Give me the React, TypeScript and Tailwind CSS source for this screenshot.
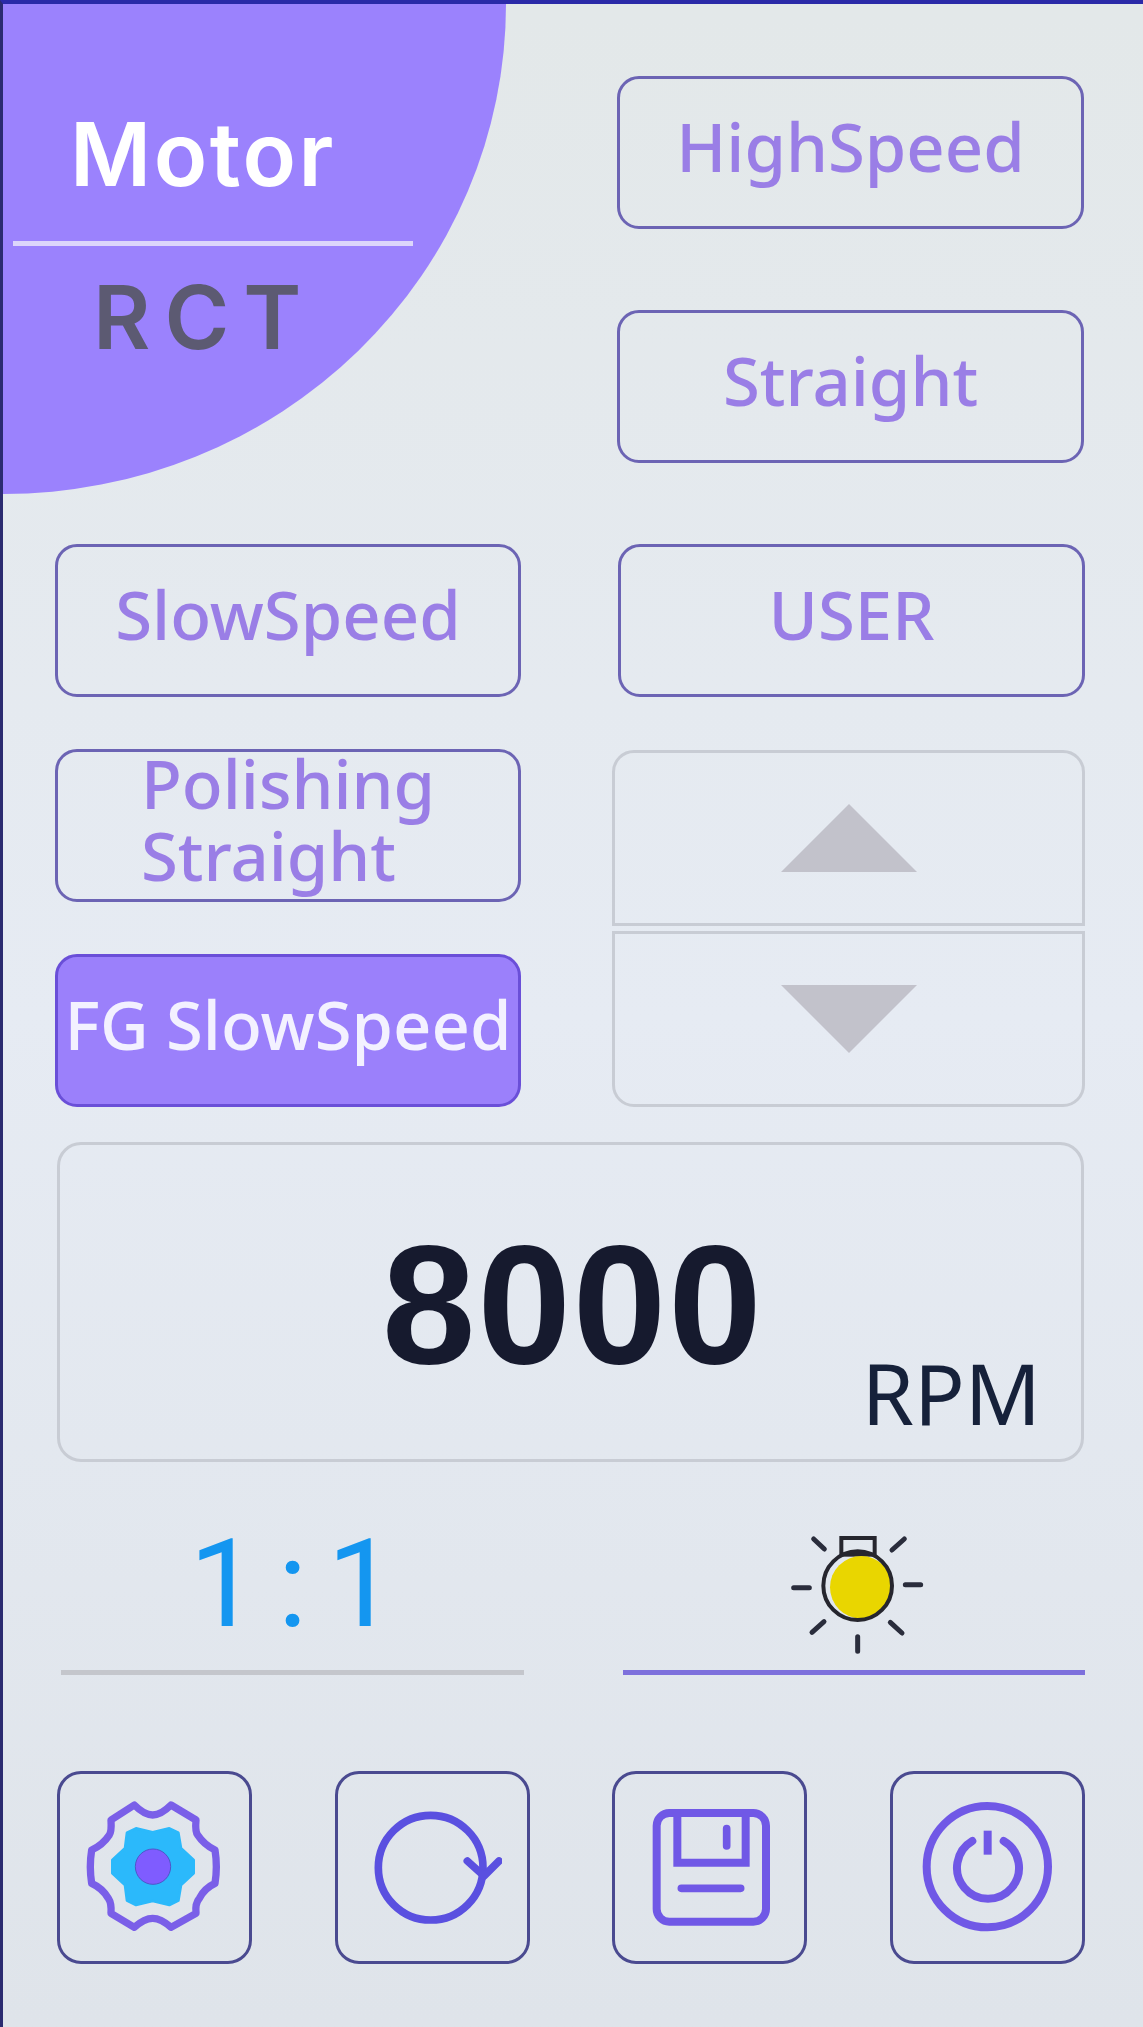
import React from "react";

const font = { fontFamily: '"Noto Sans", sans-serif' };

function ModeButton({ label, active }: { label: React.ReactNode; active?: boolean }) {
  return (
    <button
      type="button"
      style={font}
      className={`flex h-[153px] w-full items-center justify-center rounded-[22px] border-[3px] pb-[14px] text-[67px] leading-[72px] font-medium ${
        active
          ? "border-[#6a4fd8] bg-[#9b80fb] text-[#f3f1ff]"
          : "border-[#6c64b4] text-[#9a7ee6]"
      }`}
    >
      {label}
    </button>
  );
}

function IconButton({ viewBox, children }: { viewBox: string; children: React.ReactNode }) {
  return (
    <button
      type="button"
      className="flex h-[193px] w-[195px] items-center justify-center rounded-[24px] border-[3px] border-[#4a4a90]"
    >
      <svg viewBox={viewBox} className="h-[140px] w-[140px]" fill="none">
        {children}
      </svg>
    </button>
  );
}

function GearIcon() {
  return (
    <IconButton viewBox="132 114 420 420">
      <path
        d="M280 135 Q310 165 335 165 Q360 165 390 135 L465 180 Q462 215 470 225 Q490 255 522 270 Q530 320 522 370 Q490 385 475 415 Q462 430 465 460 L390 502 Q360 475 335 475 Q310 475 280 502 L210 460 Q212 430 202 415 Q185 385 152 370 Q144 320 152 270 Q185 255 205 225 Q212 215 210 180 Z"
        stroke="#7a5fe8"
        strokeWidth="22"
        strokeLinejoin="round"
      />
      <polygon
        points="285,205 335,217 385,205 412,218 420,265 458,300 458,340 420,375 412,422 385,435 335,423 285,435 258,422 252,375 214,340 214,300 252,265 258,218"
        fill="#2bb9fb"
        stroke="#2bb9fb"
        strokeWidth="8"
        strokeLinejoin="round"
      />
      <circle cx="336" cy="320" r="53" fill="#7f5cff" stroke="#4f56c8" strokeWidth="3" />
    </IconButton>
  );
}

function ReloadIcon() {
  return (
    <IconButton viewBox="969 116 420 420">
      <circle cx="1175" cy="325" r="157" stroke="#5a50e0" strokeWidth="23" />
      <path
        d="M1285 305 L1335 350 L1380 305"
        stroke="#5a50e0"
        strokeWidth="23"
        strokeLinecap="round"
        strokeLinejoin="round"
      />
    </IconButton>
  );
}

function SaveIcon() {
  return (
    <IconButton viewBox="118 116 420 420">
      <rect x="168" y="161" width="328" height="326" rx="38" stroke="#7058e6" strokeWidth="24" />
      <path d="M230 165 V310 H435 V165" stroke="#7058e6" strokeWidth="24" />
      <path
        d="M378 208 V260 M242 387 H420"
        stroke="#7058e6"
        strokeWidth="23"
        strokeLinecap="round"
      />
    </IconButton>
  );
}

function PowerIcon() {
  return (
    <IconButton viewBox="952 114 420 420">
      <circle cx="1163" cy="320" r="182" stroke="#7058e6" strokeWidth="24" />
      <path
        d="M1118 243 A93 93 0 1 0 1212 243"
        stroke="#7058e6"
        strokeWidth="24"
        strokeLinecap="round"
      />
      <path d="M1164 212 V284" stroke="#7058e6" strokeWidth="24" />
    </IconButton>
  );
}

function BulbIcon() {
  return (
    <svg viewBox="6 8 540 510" className="h-[170px] w-[180px]" fill="none">
      <rect x="238" y="122" width="100" height="50" stroke="#26262e" strokeWidth="12" />
      <circle cx="298" cy="270" r="94" fill="#e9d600" />
      <circle cx="287" cy="265" r="103" stroke="#26262e" strokeWidth="12" />
      <path
        d="M155 125 L187 155 M427 125 L390 158 M95 271 H142 M430 262 H476 M150 405 L186 373 M385 375 L420 407 M287 418 V462"
        stroke="#2a2d3c"
        strokeWidth="15"
        strokeLinecap="round"
      />
    </svg>
  );
}

export default function App() {
  return (
    <div className="h-[2027px] w-[1143px] overflow-hidden border-t-[4px] border-l-[3px] border-t-[#2a2aa8] border-l-[#2b2b70] bg-gradient-to-b from-[#e3e8e9] via-[#e6ebf3] to-[#dfe4ea]">
      {/* header row */}
      <div className="flex h-[490px]">
        <div className="h-full w-[503px] shrink-0 rounded-br-[100%] bg-[#9b82fd] pt-[100px]">
          <div
            style={{ fontFamily: "Inter, sans-serif" }}
            className="pl-[67px] text-[88px] leading-[100px] font-semibold tracking-[2.5px] text-white"
          >
            Motor
          </div>
          <div className="mt-[37px] ml-[10px] h-[5px] w-[400px] bg-[#dcd6fb]" />
          <div
            style={{ fontFamily: "Inter, sans-serif" }}
            className="mt-[28px] pl-[90px] text-[88px] leading-[86px] font-semibold tracking-[14px] text-[#5c5a72]"
          >
            RCT
          </div>
        </div>
        <div className="ml-[111px] flex w-[467px] flex-col gap-[81px] pt-[72px]">
          <ModeButton label="HighSpeed" />
          <ModeButton label="Straight" />
        </div>
      </div>

      {/* mode buttons + arrows */}
      <div className="mt-[50px] flex pl-[52px]">
        <div className="flex w-[466px] flex-col gap-[52px]">
          <ModeButton label="SlowSpeed" />
          <ModeButton
            label={
              <span className="text-left">
                <span className="block">Polishing</span>
                <span className="block">Straight</span>
              </span>
            }
          />
          <ModeButton label="FG SlowSpeed" active />
        </div>
        <div className="ml-[91px] flex w-[473px] flex-col">
          <div className="ml-[6px] w-[467px]">
            <ModeButton label="USER" />
          </div>
          <div className="mt-[53px] flex h-[176px] items-center justify-center rounded-t-[22px] border-[3px] border-[#c8ccd4]">
            <div className="h-0 w-0 border-x-[68px] border-b-[68px] border-x-transparent border-b-[#c2c2cb]" />
          </div>
          <div className="mt-[5px] flex h-[176px] items-center justify-center rounded-b-[22px] border-[3px] border-[#c8ccd4]">
            <div className="h-0 w-0 border-x-[68px] border-t-[68px] border-x-transparent border-t-[#c2c2cb]" />
          </div>
        </div>
      </div>

      {/* rpm panel */}
      <div className="mt-[35px] ml-[54px] flex h-[320px] w-[1027px] rounded-[24px] border-[3px] border-[#c8ccd4] pl-[322px]">
        <div
          style={{ fontFamily: '"Liberation Sans", sans-serif' }}
          className="pt-[76px] text-[168px] leading-[168px] font-bold tracking-[2px] text-[#161a2e]"
        >
          8000
        </div>
        <div
          style={font}
          className="mb-[24px] ml-auto self-end pr-[40px] text-[84px] leading-[84px] text-[#16213a]"
        >
          RPM
        </div>
      </div>

      {/* ratio and lamp */}
      <div className="mt-[38px] flex pl-[58px]">
        <div className="w-[463px]">
          <div
            style={{ fontFamily: "Roboto, sans-serif" }}
            className="flex h-[170px] items-center justify-center gap-[20px] text-[122px] leading-none text-[#1496f0]"
          >
            <span>1</span>
            <span>:</span>
            <span>1</span>
          </div>
          <div className="h-[5px] bg-[#c4c6cc]" />
        </div>
        <div className="ml-[99px] w-[462px]">
          <div className="flex h-[170px] items-center justify-center">
            <BulbIcon />
          </div>
          <div className="h-[5px] bg-[#7d70dc]" />
        </div>
      </div>

      {/* bottom actions */}
      <div className="mt-[96px] flex justify-between pr-[58px] pl-[54px]">
        <GearIcon />
        <ReloadIcon />
        <SaveIcon />
        <PowerIcon />
      </div>
    </div>
  );
}
